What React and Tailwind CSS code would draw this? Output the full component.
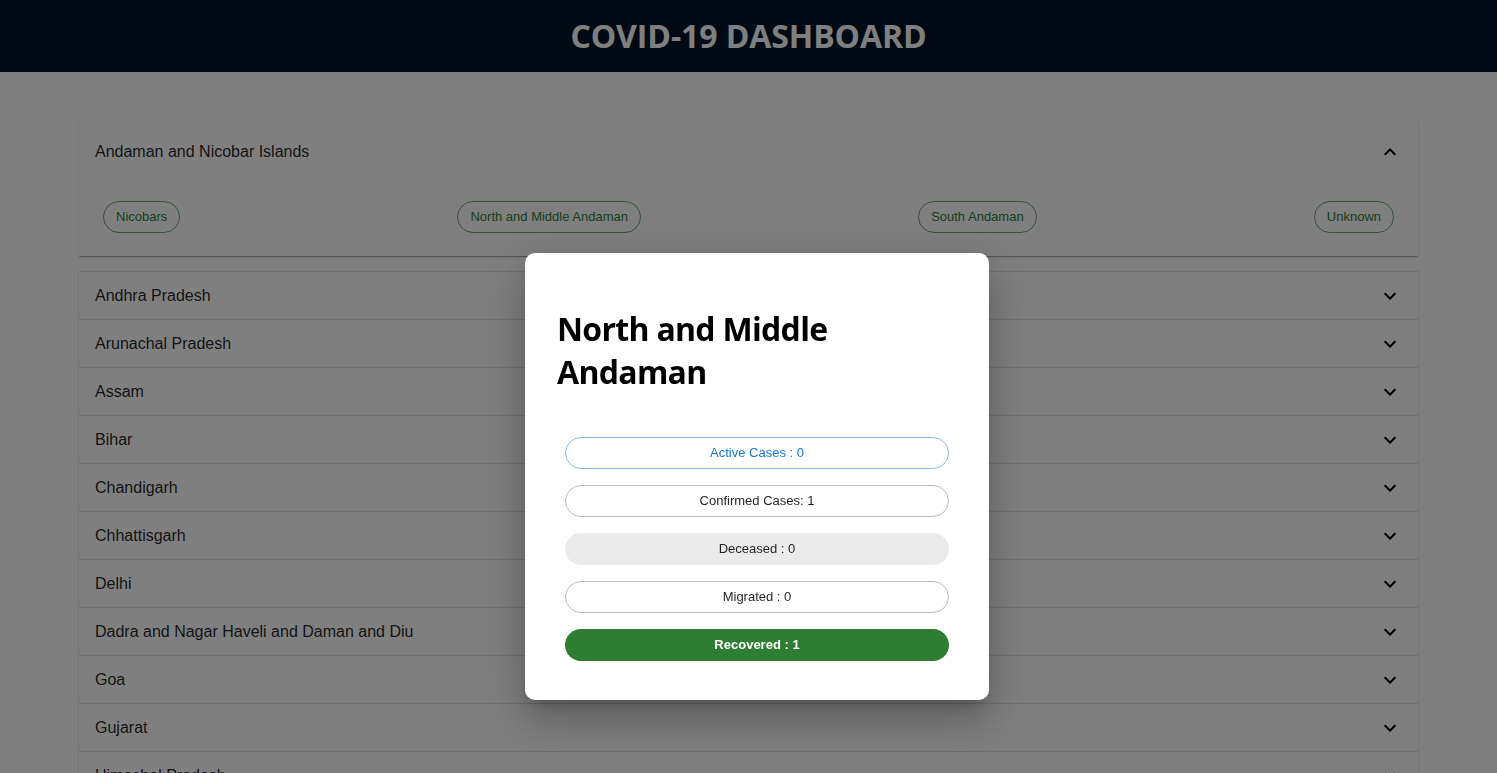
import React from "react";

const districts = ["Nicobars", "North and Middle Andaman", "South Andaman", "Unknown"];

const states = [
  "Andhra Pradesh",
  "Arunachal Pradesh",
  "Assam",
  "Bihar",
  "Chandigarh",
  "Chhattisgarh",
  "Delhi",
  "Dadra and Nagar Haveli and Daman and Diu",
  "Goa",
  "Gujarat",
  "Himachal Pradesh",
  "Haryana",
  "Jharkhand",
];

const paperShadow =
  "shadow-[0px_2px_1px_-1px_rgba(0,0,0,0.2),0px_1px_1px_0px_rgba(0,0,0,0.14),0px_1px_3px_0px_rgba(0,0,0,0.12)]";

function Chevron({ up }) {
  return (
    <svg viewBox="0 0 24 24" className={`w-6 h-6 fill-[rgba(0,0,0,0.54)]${up ? " rotate-180" : ""}`}>
      <path d="M16.59 8.59 12 13.17 7.41 8.59 6 10l6 6 6-6z" />
    </svg>
  );
}

function StateRow({ name }) {
  return (
    <div className={`bg-white border-t border-[rgba(0,0,0,0.12)] ${paperShadow}`}>
      <div className="h-[47px] flex items-center justify-between px-4">
        <span className="text-base text-[rgba(0,0,0,0.87)]">{name}</span>
        <Chevron />
      </div>
    </div>
  );
}

const stats = [
  { label: "Active Cases : 0", cls: "border border-[rgba(25,118,210,0.5)] text-[#1976d2]" },
  { label: "Confirmed Cases: 1", cls: "border border-[#bdbdbd] text-[rgba(0,0,0,0.87)]" },
  { label: "Deceased : 0", cls: "bg-[#ebebeb] text-[rgba(0,0,0,0.87)]" },
  { label: "Migrated : 0", cls: "border border-[#bdbdbd] text-[rgba(0,0,0,0.87)]" },
  { label: "Recovered : 1", cls: "bg-[#2e7d32] text-white font-bold" },
];

export default function App() {
  return (
    <div className="min-h-screen bg-white font-['Liberation_Sans',Arial,sans-serif]">
      <header className="h-[72px] bg-[#001529] flex items-center justify-center">
        <h1 className="text-white text-[32px] font-bold font-['Open_Sans','Noto_Sans',sans-serif] tracking-[-0.1px]">
          COVID-19 DASHBOARD
        </h1>
      </header>

      <main className="px-[79px] pt-[48px] pb-10">
        <div className={`bg-white rounded-t ${paperShadow}`}>
          <div className="h-[64px] flex items-center justify-between px-4">
            <span className="text-base text-[rgba(0,0,0,0.87)]">Andaman and Nicobar Islands</span>
            <Chevron up />
          </div>
          <div className="px-4 pt-[9px] pb-[15px] flex justify-between">
            {districts.map((d) => (
              <span
                key={d}
                className="m-2 h-8 px-3 rounded-full border border-[rgba(46,125,50,0.7)] text-[#2e7d32] text-[13px] flex items-center"
              >
                {d}
              </span>
            ))}
          </div>
        </div>

        <div className="mt-[15px]">
          {states.map((s) => (
            <StateRow key={s} name={s} />
          ))}
        </div>
      </main>

      <div className="fixed inset-0 bg-black/50">
        <div className="absolute left-[525px] top-[253px] w-[464px] bg-white rounded-[10px] px-8 pt-8 pb-[39px] shadow-[0px_11px_15px_-7px_rgba(0,0,0,0.2),0px_24px_38px_3px_rgba(0,0,0,0.14),0px_9px_46px_8px_rgba(0,0,0,0.12)]">
          <h2 className="mt-[23px] mb-[44px] text-[32px] leading-[42.5px] font-bold text-black font-['Open_Sans','Noto_Sans',sans-serif] tracking-[-0.7px]">
            North and Middle Andaman
          </h2>
          <div className="px-2 flex flex-col gap-4">
            {stats.map((s) => (
              <div
                key={s.label}
                className={`h-8 rounded-full flex items-center justify-center text-[13px] ${s.cls}`}
              >
                {s.label}
              </div>
            ))}
          </div>
        </div>
      </div>
    </div>
  );
}
